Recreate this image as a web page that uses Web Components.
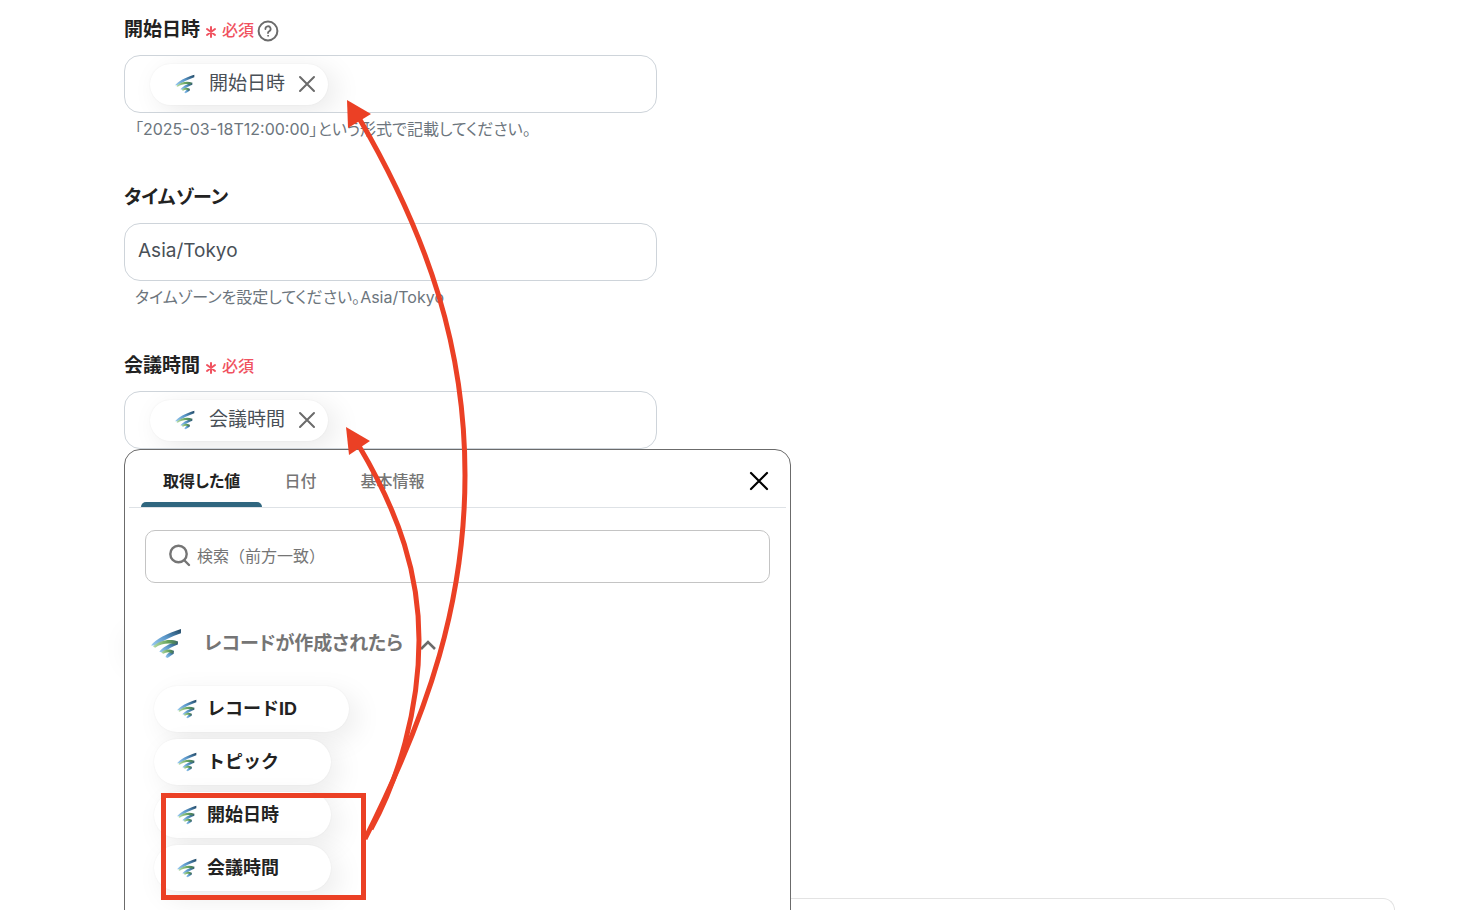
<!DOCTYPE html>
<html lang="ja">
<head>
<meta charset="utf-8">
<title>フローボット設定</title>
<style>
	html, body {
		margin: 0;
		height: 100%;
		overflow: hidden;
		background: #fff;
	}

	body {
		position: relative;
		font-family: Inter, "Noto Sans CJK JP", sans-serif;
		font-feature-settings: "palt";
		color: #222;
	}
</style>
</head>
<body>
<settings-page>
	<form-field label="開始日時" required hint help="「2025-03-18T12:00:00」という形式で記載してください。">
		<value-chip slot="chip">開始日時</value-chip>
	</form-field>
	<form-field label="タイムゾーン" value="Asia/Tokyo" help="タイムゾーンを設定してください。Asia/Tokyo"></form-field>
	<form-field label="会議時間" required>
		<value-chip slot="chip">会議時間</value-chip>
		<value-picker slot="menu" heading="レコードが作成されたら">
			<picker-item>レコードID</picker-item>
			<picker-item>トピック</picker-item>
			<picker-item>開始日時</picker-item>
			<picker-item>会議時間</picker-item>
		</value-picker>
	</form-field>
</settings-page>
<arrow-notes></arrow-notes>

<script>
class AppLogo extends HTMLElement {
	constructor() {
		super();
		this.attachShadow({ mode: "open" }).innerHTML = `
		<style>
			:host { display: block; width: 20px; height: 20px; flex: none; }
			svg { display: block; width: 100%; height: 100%; }
		</style>
		<svg viewBox="0 0 30 30" aria-hidden="true">
			<defs>
				<linearGradient id="blue" x1="0" x2="1" y1="1" y2="0">
					<stop offset="0" stop-color="#9ccdf0"/>
					<stop offset=".5" stop-color="#5b98cb"/>
					<stop offset="1" stop-color="#1f4560"/>
				</linearGradient>
				<linearGradient id="green" x1="0" x2="1">
					<stop offset="0" stop-color="#b5dba8"/>
					<stop offset=".6" stop-color="#65a35c"/>
					<stop offset="1" stop-color="#3d6c63"/>
				</linearGradient>
			</defs>
			<path fill="url(#blue)" d="M29 1V5C20 8 12 12 4 17L0 17C4 11 16 5 29 1Z"/>
			<path fill="url(#blue)" d="M26 13V16C21 18 17 20 12 24L8 23C11 19 17 15 26 13Z"/>
			<path fill="url(#blue)" d="M22 22V25L16 29L14 28C15 25 18 23 22 22Z"/>
			<path fill="url(#green)" d="M2 18C8 12 18 10 26 13L24 16C17 14 10 15 4 19Z"/>
			<path fill="url(#green)" d="M10 24C13 20 18 20 22 22L21 25C18 23 15 23 12 25Z"/>
		</svg>`;
	}
}

class ValueChip extends HTMLElement {
	constructor() {
		super();
		this.attachShadow({ mode: "open" }).innerHTML = `
		<style>
			:host {
				display: flex;
				align-items: center;
				height: 41px;
				padding: 0 11px 0 25px;
				border-radius: 21px;
				background: #fff;
				box-shadow: 8px 6px 28px rgba(0, 0, 0, .09), 0 0 2px rgba(0, 0, 0, .06);
				font-size: 19px;
				line-height: 28px;
				color: #495057;
				white-space: nowrap;
			}
			span { margin: 0 12px 0 14px; }
			button { padding: 0; border: 0; background: none; }
			svg { display: block; }
		</style>
		<app-logo></app-logo>
		<span><slot></slot></span>
		<button type="button" aria-label="削除">
			<svg width="20" height="20" viewBox="0 0 20 20" fill="none" stroke="#6b6b6b" stroke-width="2" stroke-linecap="round"><path d="M3 3L17 17M17 3L3 17"/></svg>
		</button>`;
	}
}

class FormField extends HTMLElement {
	connectedCallback() {
		const required = this.hasAttribute("required") ? `
			<svg class="star" width="12" height="12" viewBox="0 0 12 12" stroke="#f0525f" stroke-width="2" stroke-linecap="round"><path d="M6 1V11M2 3L10 9M10 3L2 9"/></svg>
			<span class="required">必須</span>` : "";
		const hint = this.hasAttribute("hint") ? `
			<button type="button" aria-label="ヘルプ">
				<svg width="22" height="22" viewBox="0 0 22 22" fill="none" stroke="#6b6b6b" stroke-width="2" stroke-linecap="round"><circle cx="11" cy="11" r="9.4"/><path d="M8.4 9A2.6 2.6 0 1 1 12.2 11.2C11.3 11.7 11 12.1 11 13" stroke-width="1.8"/><circle cx="11" cy="15.8" r=".5" stroke-width="1"/></svg>
			</button>` : "";
		const help = this.getAttribute("help");

		this.attachShadow({ mode: "open" }).innerHTML = `
		<style>
			:host { display: block; max-width: 533px; }
			.label {
				display: flex;
				align-items: center;
				height: 24px;
				margin-bottom: 13px;
			}
			label { font-size: 19px; line-height: 24px; font-weight: 700; }
			.star { margin: 4px 5px 0 5px; }
			.required { color: #f0525f; font-size: 16px; line-height: 24px; font-weight: 500; }
			button { margin-left: 3px; padding: 0; border: 0; background: none; }
			button svg { display: block; margin-top: 2px; }
			.control { position: relative; }
			.box {
				box-sizing: border-box;
				display: flex;
				align-items: center;
				height: 58px;
				border: 1px solid #ced4da;
				border-radius: 16px;
				background: #fff;
				overflow: hidden;
			}
			::slotted([slot="chip"]) { margin-left: 25px; }
			input {
				flex: 1;
				min-width: 0;
				padding: 0 13px 3px;
				border: 0;
				outline: 0;
				background: none;
				font: inherit;
				font-size: 19px;
				color: #495057;
			}
			p {
				margin: 4px 0 1px 11px;
				font-size: 16px;
				line-height: 24px;
				color: #6c757d;
			}
		</style>
		<div class="label"><label for="field">${this.getAttribute("label")}</label>${required}${hint}</div>
		<div class="control">
			<div class="box">
				<slot name="chip"></slot>
				<input id="field" type="text" value="${this.getAttribute("value") || ""}">
			</div>
			<slot name="menu"></slot>
		</div>
		${help ? `<p>${help}</p>` : ""}`;
	}
}

class PickerItem extends HTMLElement {
	constructor() {
		super();
		this.attachShadow({ mode: "open" }).innerHTML = `
		<style>
			:host { display: block; }
			button {
				display: flex;
				align-items: center;
				gap: 10px;
				height: 46px;
				padding: 0 52px 0 23px;
				border: 0;
				border-radius: 23px;
				background: #fff;
				box-shadow: 8px 8px 28px rgba(0, 0, 0, .08), 0 0 2px rgba(0, 0, 0, .06);
				font: inherit;
				font-feature-settings: normal;
				font-size: 18px;
				font-weight: 700;
				color: #222;
				white-space: nowrap;
			}
			span { padding-bottom: 4px; }
		</style>
		<button type="button"><app-logo></app-logo><span><slot></slot></span></button>`;
	}
}

class ValuePicker extends HTMLElement {
	connectedCallback() {
		this.attachShadow({ mode: "open" }).innerHTML = `
		<style>
			:host {
				box-sizing: border-box;
				position: absolute;
				z-index: 1;
				top: 100%;
				left: 0;
				width: 667px;
				max-width: 90vw;
				padding: 0 4px 40px;
				border: 1px solid #6b6b6b;
				border-radius: 16px;
				background: #fff;
			}
			button { padding: 0; border: 0; background: none; font: inherit; font-feature-settings: inherit; color: inherit; }
			svg { display: block; flex: none; }
			nav {
				display: flex;
				align-items: center;
				height: 57px;
				padding: 0 17px 0 12px;
				border-bottom: 1px solid #dee2e6;
			}
			.tab {
				box-sizing: border-box;
				height: 57px;
				padding: 2px 22px 0;
				font-size: 16px;
				font-weight: 500;
				color: #757575;
			}
			.tab.active {
				position: relative;
				font-weight: 700;
				color: #222;
			}
			.tab.active::after {
				content: "";
				position: absolute;
				left: 0;
				right: 0;
				bottom: 0;
				height: 5px;
				border-radius: 5px 5px 0 0;
				background: #2f667f;
			}
			.close { margin: 5px 0 0 auto; }
			.search {
				box-sizing: border-box;
				display: flex;
				align-items: center;
				gap: 6px;
				height: 53px;
				margin: 22px 16px 0;
				padding: 0 22px 2px;
				border: 1px solid #c4c4c4;
				border-radius: 10px;
			}
			.search input {
				flex: 1;
				min-width: 0;
				padding: 0;
				border: 0;
				outline: 0;
				background: none;
				font: inherit;
				font-size: 16px;
				font-feature-settings: normal;
			}
			.search input::placeholder { color: #757575; }
			.heading {
				display: flex;
				align-items: center;
				height: 32px;
				margin: 44px 22px 27px;
				font-size: 19px;
				font-weight: 700;
				color: #757575;
			}
			.heading app-logo { width: 31px; height: 31px; margin-right: 22px; }
			.heading span { padding-bottom: 4px; }
			.heading svg { margin: 3px 0 0 17px; }
			.items {
				display: flex;
				flex-direction: column;
				align-items: flex-start;
				gap: 7px;
				padding-left: 25px;
			}
		</style>
		<nav>
			<button type="button" class="tab active">取得した値</button>
			<button type="button" class="tab">日付</button>
			<button type="button" class="tab">基本情報</button>
			<button type="button" class="close" aria-label="閉じる">
				<svg width="20" height="20" viewBox="0 0 20 20" stroke="#000" stroke-width="2.2" stroke-linecap="round"><path d="M2 2L18 18M18 2L2 18"/></svg>
			</button>
		</nav>
		<div class="search">
			<svg width="23" height="23" viewBox="0 0 23 23" fill="none" stroke="#757575" stroke-width="2.4" stroke-linecap="round"><circle cx="10.5" cy="10" r="8.2"/><path d="M16.5 16.5L21 21"/></svg>
			<input type="text" aria-label="検索" placeholder="検索（前方一致）">
		</div>
		<button type="button" class="heading">
			<app-logo></app-logo>
			<span>${this.getAttribute("heading")}</span>
			<svg width="16" height="12" viewBox="0 0 16 12" fill="none" stroke="#6b6b6b" stroke-width="2.6"><path d="M1 10L8 3L15 10"/></svg>
		</button>
		<div class="items"><slot></slot></div>`;
	}
}

class SettingsPage extends HTMLElement {
	constructor() {
		super();
		this.attachShadow({ mode: "open" }).innerHTML = `
		<style>
			:host {
				box-sizing: border-box;
				display: flex;
				flex-direction: column;
				height: 100%;
				padding: 18px 65px 0 124px;
			}
			.fields { display: grid; gap: 44px; }
			.round {
				flex: none;
				width: 44px;
				height: 44px;
				margin-top: 166px;
				border-radius: 22px;
				box-shadow: 0 12px 28px rgba(0, 0, 0, .05);
			}
			.card {
				flex: 1;
				margin-top: 239px;
				border: 1px solid #e3e3e3;
				border-bottom: 0;
				border-radius: 20px 20px 0 0;
			}
		</style>
		<div class="fields"><slot></slot></div>
		<div class="round"></div>
		<div class="card"></div>`;
	}
}

// Arrows and frame drawn freely on top of the page
class ArrowNotes extends HTMLElement {
	constructor() {
		super();
		this.attachShadow({ mode: "open" }).innerHTML = `
		<style>
			:host {
				position: absolute;
				z-index: 2;
				top: 0;
				left: 0;
				pointer-events: none;
			}
			svg { display: block; }
		</style>
		<svg width="480" height="910" viewBox="0 0 480 910" fill="none" stroke="#eb4025" stroke-width="5" aria-hidden="true">
			<path d="M359 118C430 240 465 350 465 475C465 600 430 710 365 839"/>
			<path d="M359 446C400 515 419 575 419 640C419 710 398 780 371 829"/>
			<path d="M347 100L371 114L348 128Z" fill="#eb4025" stroke="none"/>
			<path d="M346 427L370 441L349 455Z" fill="#eb4025" stroke="none"/>
			<rect x="163.500" y="795.500" width="200" height="102"/>
		</svg>`;
	}
}

customElements.define("app-logo", AppLogo);
customElements.define("value-chip", ValueChip);
customElements.define("picker-item", PickerItem);
customElements.define("value-picker", ValuePicker);
customElements.define("form-field", FormField);
customElements.define("settings-page", SettingsPage);
customElements.define("arrow-notes", ArrowNotes);
</script>
</body>
</html>
